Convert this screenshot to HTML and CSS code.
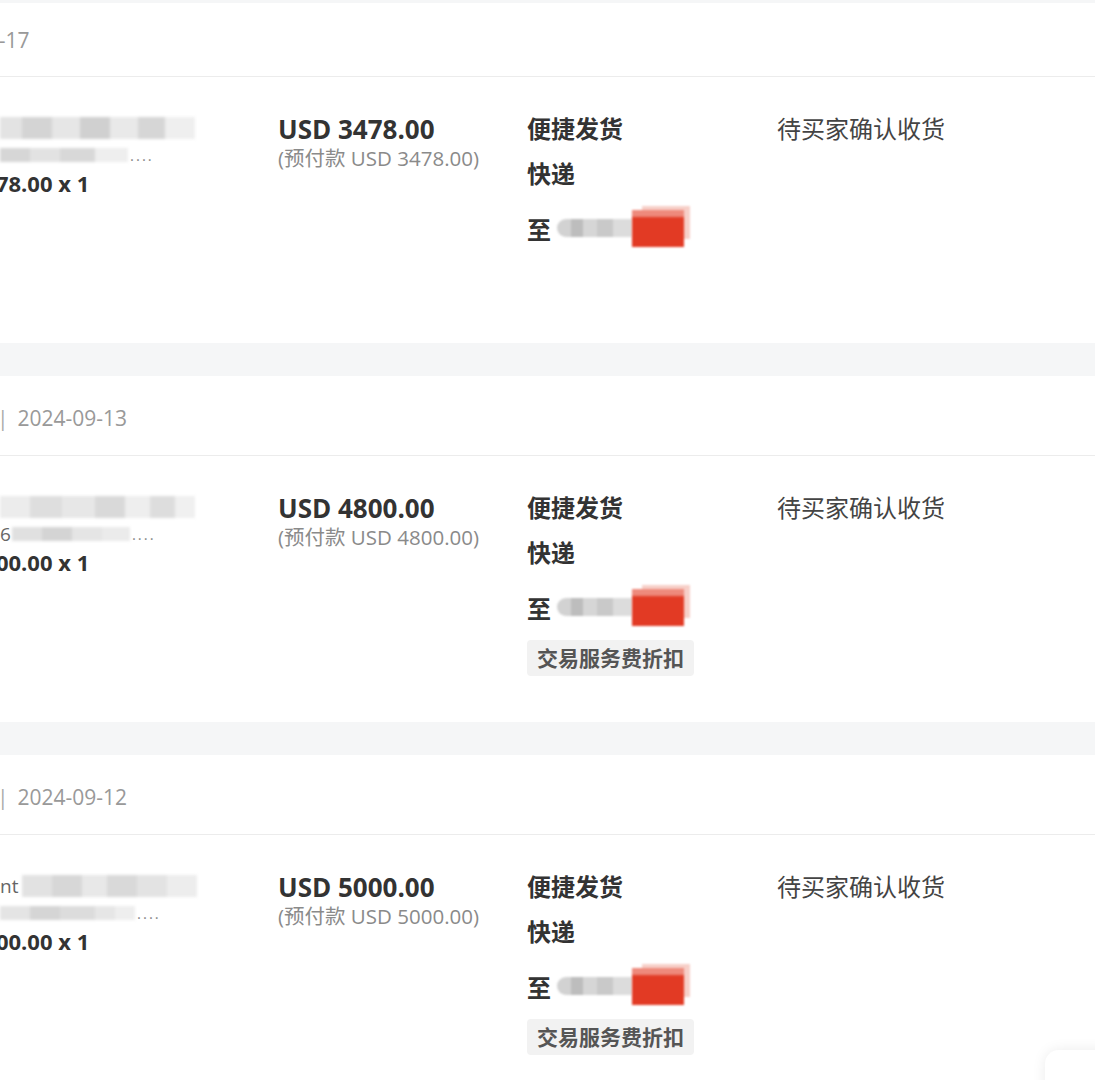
FILE: index.html
```html
<!DOCTYPE html>
<html lang="zh-CN">
<head>
<meta charset="utf-8">
<title>订单列表</title>
<link rel="stylesheet" href="styles.css">
</head>
<body>
<div class="page">
  <div class="gap gap-top"></div>

  <section class="order">
    <div class="order-head head-first"><span class="date date-cut">2024-09-17</span></div>
    <div class="order-row">
      <div class="col-product">
        <div class="blur-line l1"><span class="mosaic m-a"></span></div>
        <div class="blur-line l2"><span class="mosaic m-b"></span><span class="ell">....</span></div>
        <div class="qty">USD 3478.00 x 1</div>
      </div>
      <div class="col-price">
        <div class="price">USD 3478.00</div>
        <div class="prepay">(预付款 USD 3478.00)</div>
      </div>
      <div class="col-ship">
        <div class="ship-line">便捷发货</div>
        <div class="ship-line">快递</div>
        <div class="ship-to"><span class="to-label">至</span><span class="addr-blur"></span><span class="addr-red"></span></div>
      </div>
      <div class="col-status">待买家确认收货</div>
    </div>
  </section>

  <div class="gap"></div>

  <section class="order">
    <div class="order-head"><span class="bar">|</span><span class="date">2024-09-13</span></div>
    <div class="order-row">
      <div class="col-product">
        <div class="blur-line l1"><span class="mosaic m-c"></span></div>
        <div class="blur-line l2"><span class="lead">6</span><span class="mosaic m-d"></span><span class="ell">....</span></div>
        <div class="qty">USD 4800.00 x 1</div>
      </div>
      <div class="col-price">
        <div class="price">USD 4800.00</div>
        <div class="prepay">(预付款 USD 4800.00)</div>
      </div>
      <div class="col-ship">
        <div class="ship-line">便捷发货</div>
        <div class="ship-line">快递</div>
        <div class="ship-to"><span class="to-label">至</span><span class="addr-blur"></span><span class="addr-red"></span></div>
        <div class="tag">交易服务费折扣</div>
      </div>
      <div class="col-status">待买家确认收货</div>
    </div>
  </section>

  <div class="gap"></div>

  <section class="order">
    <div class="order-head"><span class="bar">|</span><span class="date">2024-09-12</span></div>
    <div class="order-row">
      <div class="col-product">
        <div class="blur-line l1"><span class="lead">nt</span><span class="mosaic m-e"></span></div>
        <div class="blur-line l2"><span class="mosaic m-f"></span><span class="ell">....</span></div>
        <div class="qty">USD 5000.00 x 1</div>
      </div>
      <div class="col-price">
        <div class="price">USD 5000.00</div>
        <div class="prepay">(预付款 USD 5000.00)</div>
      </div>
      <div class="col-ship">
        <div class="ship-line">便捷发货</div>
        <div class="ship-line">快递</div>
        <div class="ship-to"><span class="to-label">至</span><span class="addr-blur"></span><span class="addr-red"></span></div>
        <div class="tag">交易服务费折扣</div>
      </div>
      <div class="col-status">待买家确认收货</div>
    </div>
  </section>
</div>
<div class="float-btn"></div>
</body>
</html>
```
FILE: styles.css
```css
html, body {
  margin: 0;
  padding: 0;
  background: #ffffff;
  overflow: hidden;
}
body {
  font-family: "Open Sans", "Noto Sans CJK SC", sans-serif;
  color: #333333;
}
.page {
  width: 1095px;
}
.gap {
  height: 33px;
  background: #f5f6f7;
}
.gap-top {
  height: 3px;
}
.order-head {
  height: 80px;
  display: flex;
  align-items: center;
  border-bottom: 1px solid #ececec;
  box-sizing: border-box;
  overflow: hidden;
  font-size: 21px;
  color: #999999;
  padding-top: 4px;
}
.head-first {
  height: 74px;
  padding-top: 0;
}
.bar {
  color: #aaaaaa;
  margin-left: -3px;
  margin-right: 9px;
}
.date-cut {
  margin-left: -80px;
}
.order-row {
  height: 266px;
  display: grid;
  grid-template-columns: 278px 249px 250px 1fr;
  padding-top: 37px;
  box-sizing: border-box;
}
.col-product {
  overflow: hidden;
}
.blur-line {
  display: flex;
  align-items: center;
  white-space: nowrap;
}
.l1 {
  height: 28px;
}
.l2 {
  height: 26px;
}
.mosaic {
  display: inline-block;
  flex: none;
  filter: blur(1.4px);
}
.lead {
  color: #666;
  font-size: 19px;
  line-height: 22px;
}
.l1 .mosaic {
  height: 22px;
}
.l2 .mosaic {
  height: 14px;
}
.m-a {
  width: 195px;
  background: linear-gradient(90deg, #e3e3e3 0 22px, #d4d4d4 22px 52px, #e6e6e6 52px 80px, #d0d0d0 80px 110px, #e9e9e9 110px 138px, #d6d6d6 138px 165px, #efefef 165px 195px);
}
.m-b {
  width: 128px;
  background: linear-gradient(90deg, #d6d6d6 0 30px, #e2e2e2 30px 60px, #d8d8d8 60px 95px, #eeeeee 95px 128px);
}
.m-c {
  width: 195px;
  background: linear-gradient(90deg, #ececec 0 30px, #dedede 30px 62px, #e7e7e7 62px 95px, #d9d9d9 95px 125px, #eeeeee 125px 150px, #dddddd 150px 175px, #f0f0f0 175px 195px);
}
.m-d {
  width: 118px;
  margin-left: 1px;
  background: linear-gradient(90deg, #e0e0e0 0 30px, #d4d4d4 30px 60px, #e5e5e5 60px 90px, #ebebeb 90px 118px);
}
.m-e {
  width: 175px;
  margin-left: 4px;
  background: linear-gradient(90deg, #e2e2e2 0 30px, #d7d7d7 30px 60px, #e8e8e8 60px 85px, #d9d9d9 85px 115px, #e3e3e3 115px 145px, #ededed 145px 175px);
}
.m-f {
  width: 135px;
  background: linear-gradient(90deg, #e4e4e4 0 30px, #d5d5d5 30px 60px, #dcdcdc 60px 95px, #e6e6e6 95px 115px, #eeeeee 115px 135px);
}
.ell {
  color: #888;
  font-size: 15px;
  margin-left: 2px;
  letter-spacing: 2px;
}
.qty {
  font-size: 22px;
  font-weight: 700;
  line-height: 30px;
  color: #333;
  white-space: nowrap;
  margin-left: -80px;
}
.col-price {
  display: flex;
  flex-direction: column;
}
.price {
  font-size: 26px;
  font-weight: 700;
  line-height: 30px;
  color: #333;
  white-space: nowrap;
}
.prepay {
  font-size: 20.5px;
  line-height: 28px;
  color: #8a8a8a;
  white-space: nowrap;
}
.col-ship {
  display: flex;
  flex-direction: column;
  align-items: flex-start;
}
.ship-line {
  font-size: 24px;
  font-weight: 700;
  line-height: 30px;
  color: #333;
  margin-bottom: 15px;
}
.ship-line + .ship-line {
  margin-bottom: 20px;
}
.ship-to {
  display: flex;
  align-items: center;
  height: 38px;
  font-size: 24px;
  font-weight: 700;
  color: #333;
}
.to-label {
  margin-right: 6px;
}
.addr-blur {
  width: 75px;
  height: 18px;
  border-radius: 9px 0 0 9px;
  background: linear-gradient(90deg, #d2d2d2 0 14px, #bdbdbd 14px 26px, #d6d6d6 26px 40px, #c9c9c9 40px 56px, #dcdcdc 56px 75px);
  filter: blur(1.2px);
}
.addr-red {
  width: 52px;
  height: 37px;
  background: linear-gradient(180deg, #ee8a7c 0 6px, #e23a24 8px);
  box-shadow: 8px -6px 0 -2px #f7cfc8;
  filter: blur(0.8px);
}
.tag {
  margin-top: 14px;
  height: 36px;
  line-height: 36px;
  padding: 0 10px;
  background: #f2f2f2;
  border-radius: 4px;
  font-size: 21px;
  font-weight: 700;
  color: #555;
}
.col-status {
  font-size: 24px;
  line-height: 30px;
  color: #444;
}
.float-btn {
  position: fixed;
  right: -30px;
  bottom: -40px;
  width: 80px;
  height: 70px;
  border-radius: 14px;
  background: #fff;
  box-shadow: 0 0 14px rgba(0, 0, 0, 0.08);
}
```
